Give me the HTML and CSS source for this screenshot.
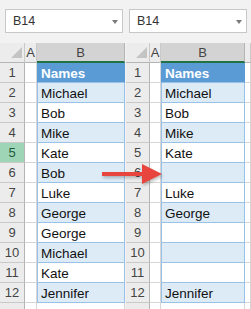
FILE: index.html
```html
<!DOCTYPE html>
<html lang="en">
<head>
    <meta charset="UTF-8">
    <title>Remove blank rows</title>
    <link rel="stylesheet" href="styles.css">
</head>
<body>
    <div class="sheets">
        <!-- Before -->
        <div class="panel panel-left">
            <div class="namebar">
                <div class="namebox"><span>B14</span><span class="caret"></span></div>
            </div>
            <div class="grid">
                <div class="row head">
                    <div class="rh corner"><span class="tri"></span></div>
                    <div class="ch">A</div>
                    <div class="ch sel">B</div>
                </div>
                <div class="row"><div class="rh">1</div><div class="c"></div><div class="c b hdr">Names</div></div>
                <div class="row"><div class="rh">2</div><div class="c"></div><div class="c b band">Michael</div></div>
                <div class="row"><div class="rh">3</div><div class="c"></div><div class="c b">Bob</div></div>
                <div class="row"><div class="rh">4</div><div class="c"></div><div class="c b band">Mike</div></div>
                <div class="row"><div class="rh active">5</div><div class="c"></div><div class="c b">Kate</div></div>
                <div class="row"><div class="rh">6</div><div class="c"></div><div class="c b band">Bob</div></div>
                <div class="row"><div class="rh">7</div><div class="c"></div><div class="c b">Luke</div></div>
                <div class="row"><div class="rh">8</div><div class="c"></div><div class="c b band">George</div></div>
                <div class="row"><div class="rh">9</div><div class="c"></div><div class="c b">George</div></div>
                <div class="row"><div class="rh">10</div><div class="c"></div><div class="c b band">Michael</div></div>
                <div class="row"><div class="rh">11</div><div class="c"></div><div class="c b">Kate</div></div>
                <div class="row"><div class="rh">12</div><div class="c"></div><div class="c b band">Jennifer</div></div>
                <div class="row"><div class="rh"></div><div class="c"></div><div class="c"></div></div>
            </div>
        </div>

        <!-- After -->
        <div class="panel panel-right">
            <div class="namebar">
                <div class="namebox"><span>B14</span><span class="caret"></span></div>
            </div>
            <div class="grid">
                <div class="row head">
                    <div class="rh corner"><span class="tri"></span></div>
                    <div class="ch">A</div>
                    <div class="ch sel">B</div>
                    <div class="ch"></div>
                </div>
                <div class="row"><div class="rh">1</div><div class="c"></div><div class="c b hdr">Names</div><div class="c"></div></div>
                <div class="row"><div class="rh">2</div><div class="c"></div><div class="c b band">Michael</div><div class="c"></div></div>
                <div class="row"><div class="rh">3</div><div class="c"></div><div class="c b">Bob</div><div class="c"></div></div>
                <div class="row"><div class="rh">4</div><div class="c"></div><div class="c b band">Mike</div><div class="c"></div></div>
                <div class="row"><div class="rh">5</div><div class="c"></div><div class="c b">Kate</div><div class="c"></div></div>
                <div class="row"><div class="rh">6</div><div class="c"></div><div class="c b band"></div><div class="c"></div></div>
                <div class="row"><div class="rh">7</div><div class="c"></div><div class="c b">Luke</div><div class="c"></div></div>
                <div class="row"><div class="rh">8</div><div class="c"></div><div class="c b band">George</div><div class="c"></div></div>
                <div class="row"><div class="rh">9</div><div class="c"></div><div class="c b"></div><div class="c"></div></div>
                <div class="row"><div class="rh">10</div><div class="c"></div><div class="c b band"></div><div class="c"></div></div>
                <div class="row"><div class="rh">11</div><div class="c"></div><div class="c b"></div><div class="c"></div></div>
                <div class="row"><div class="rh">12</div><div class="c"></div><div class="c b band">Jennifer</div><div class="c"></div></div>
                <div class="row"><div class="rh"></div><div class="c"></div><div class="c"></div><div class="c"></div></div>
            </div>
        </div>
    </div>

    <svg class="arrow" width="70" height="30" viewBox="0 0 70 30">
        <rect x="2" y="10" width="42" height="4" fill="#e8453f"/>
        <polygon points="42,2 62,12 42,22" fill="#e8453f"/>
    </svg>
</body>
</html>
```

FILE: styles.css
```css
body {
    margin: 0;
    background: #f2f2f2;
    font-family: 'Liberation Sans', Arial, sans-serif;
    overflow: hidden;
}

.sheets {
    display: flex;
    gap: 1px;
    width: 251px;
    height: 309px;
}

.panel {
    width: 125px;
    overflow: hidden;
}

.namebar {
    height: 43px;
    padding-top: 9px;
    box-sizing: border-box;
}

.namebox {
    width: 118px;
    height: 24px;
    box-sizing: border-box;
    background: #fff;
    border: 1px solid #c8c8c8;
    display: flex;
    align-items: center;
    justify-content: space-between;
    padding: 0 4px 0 7px;
    font-size: 12.5px;
    color: #333;
}

.panel-left .namebox { margin-left: 5px; }
.panel-right .namebox { margin-left: 3px; }

.caret {
    width: 0;
    height: 0;
    border-left: 3.5px solid transparent;
    border-right: 3.5px solid transparent;
    border-top: 4px solid #7a7a7a;
    margin-top: 1px;
}

.row {
    display: grid;
    height: 20px;
}

.panel-left .row { grid-template-columns: 25px 12px 88px; }
.panel-right .row { grid-template-columns: 24px 11px 84px 6px; }

.rh, .ch, .c {
    box-sizing: border-box;
    height: 20px;
    border-right: 1px solid #d6d6d6;
    border-bottom: 1px solid #d6d6d6;
}

.rh {
    background: #ececec;
    border-right-color: #b4b4b4;
    border-bottom-color: #c9c9c9;
    text-align: center;
    font-size: 13px;
    line-height: 20px;
    color: #444;
}

.rh.active {
    background: #9fd5b7;
    color: #1f5b38;
}

.head .rh, .ch {
    background: #ececec;
    border-bottom-color: #b4b4b4;
    border-right-color: #c9c9c9;
}

.ch {
    text-align: center;
    font-size: 13px;
    line-height: 20px;
    color: #444;
}

.ch.sel {
    background: #d3d3d3;
    border-bottom: 2px solid #217346;
    border-right-color: #b4b4b4;
}

.corner {
    position: relative;
}

.tri {
    position: absolute;
    right: 2px;
    bottom: 4px;
    width: 0;
    height: 0;
    border-left: 11px solid transparent;
    border-bottom: 11px solid #c4c4c4;
}

.c {
    background: #fff;
    font-size: 13.5px;
    line-height: 21px;
    color: #111;
    padding-left: 4px;
    white-space: nowrap;
    overflow: hidden;
}

.c.b {
    border-left: 1px solid #9bc2e6;
    border-right: 1px solid #9bc2e6;
    border-bottom-color: #9bc2e6;
    padding-left: 3px;
}

.c.band {
    background: #ddebf7;
}

.c.hdr {
    background: #5b9bd5;
    color: #fff;
    font-weight: bold;
    border-color: #5b9bd5;
    border-bottom-color: #9bc2e6;
}

.arrow {
    position: absolute;
    left: 100px;
    top: 162px;
    filter: drop-shadow(1px 2px 1.5px rgba(0, 0, 0, 0.25));
}
```
